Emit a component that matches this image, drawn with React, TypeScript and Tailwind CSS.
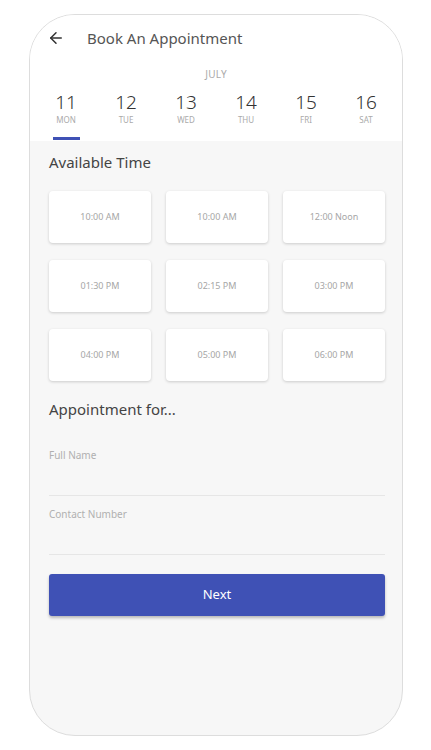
import { ArrowLeft } from 'lucide-react'

const days = [
  { n: '11', d: 'MON' },
  { n: '12', d: 'TUE' },
  { n: '13', d: 'WED' },
  { n: '14', d: 'THU' },
  { n: '15', d: 'FRI' },
  { n: '16', d: 'SAT' }
]

const times = [
  '10:00 AM',
  '10:00 AM',
  '12:00 Noon',
  '01:30 PM',
  '02:15 PM',
  '03:00 PM',
  '04:00 PM',
  '05:00 PM',
  '06:00 PM'
]

function Field({ label }: { label: string }): React.ReactElement {
  return (
    <div className="h-[59px] border-b border-[#e6e6e6] pt-[11px]">
      <div className="text-[10px] text-[#b0b0b0]">{label}</div>
    </div>
  )
}

export default function App(): React.ReactElement {
  return (
    <div
      className="min-h-[750px] w-[431px] bg-white pt-[14px]"
      style={{ fontFamily: '"Noto Sans", Lato, sans-serif' }}
    >
      <div className="ml-[29px] h-[722px] w-[374px] overflow-hidden rounded-[46px] border border-[#dddddd] bg-[#f7f7f7]">
        <div className="bg-white pb-[1px]">
          <div className="flex h-[33px] items-end pl-[17px]">
            <ArrowLeft size={18} strokeWidth={2} className="mb-[1px] text-[#333]" />
            <span className="ml-[22px] text-[15px] leading-[20px] text-[#555]">
              Book An Appointment
            </span>
          </div>
          <div className="mt-[19px] text-center text-[10px] tracking-wide text-[#aaa]">
            JULY
          </div>
          <div className="mt-[8px] flex px-[6px]">
            {days.map((day, i) => (
              <div key={day.n} className="flex w-[60px] flex-col items-center">
                <span className="text-[19px] font-light leading-[24px] text-[#333]">
                  {day.n}
                </span>
                <span className="text-[8px] leading-[12px] text-[#aaa]">{day.d}</span>
                <div
                  className={
                    i === 0
                      ? 'mt-[11px] h-[3px] w-[27px] bg-[#3f51b5]'
                      : 'mt-[11px] h-[3px] w-[27px]'
                  }
                />
              </div>
            ))}
          </div>
        </div>
        <div className="ml-[19px] w-[336px]">
          <div className="mt-[11px] text-[15px] leading-[20px] text-[#444]">Available Time</div>
          <div className="mt-[19px] grid grid-cols-3 gap-x-[15px] gap-y-[17px]">
            {times.map((t, i) => (
              <div
                key={i}
                className="flex h-[52px] items-center justify-center rounded-[4px] bg-white text-[9px] text-[#a6a6a6] shadow-[0_1px_3px_rgba(0,0,0,0.18)]"
              >
                {t}
              </div>
            ))}
          </div>
          <div className="mt-[18px] text-[15px] leading-[20px] text-[#444]">
            Appointment for...
          </div>
          <div className="mt-[18px]">
            <Field label="Full Name" />
            <Field label="Contact Number" />
          </div>
          <button className="mt-[19px] flex h-[42px] w-full items-center justify-center rounded-[3px] bg-[#3f51b5] text-[13px] text-white shadow-[0_2px_3px_rgba(0,0,0,0.25)]">
            Next
          </button>
        </div>
      </div>
    </div>
  )
}
